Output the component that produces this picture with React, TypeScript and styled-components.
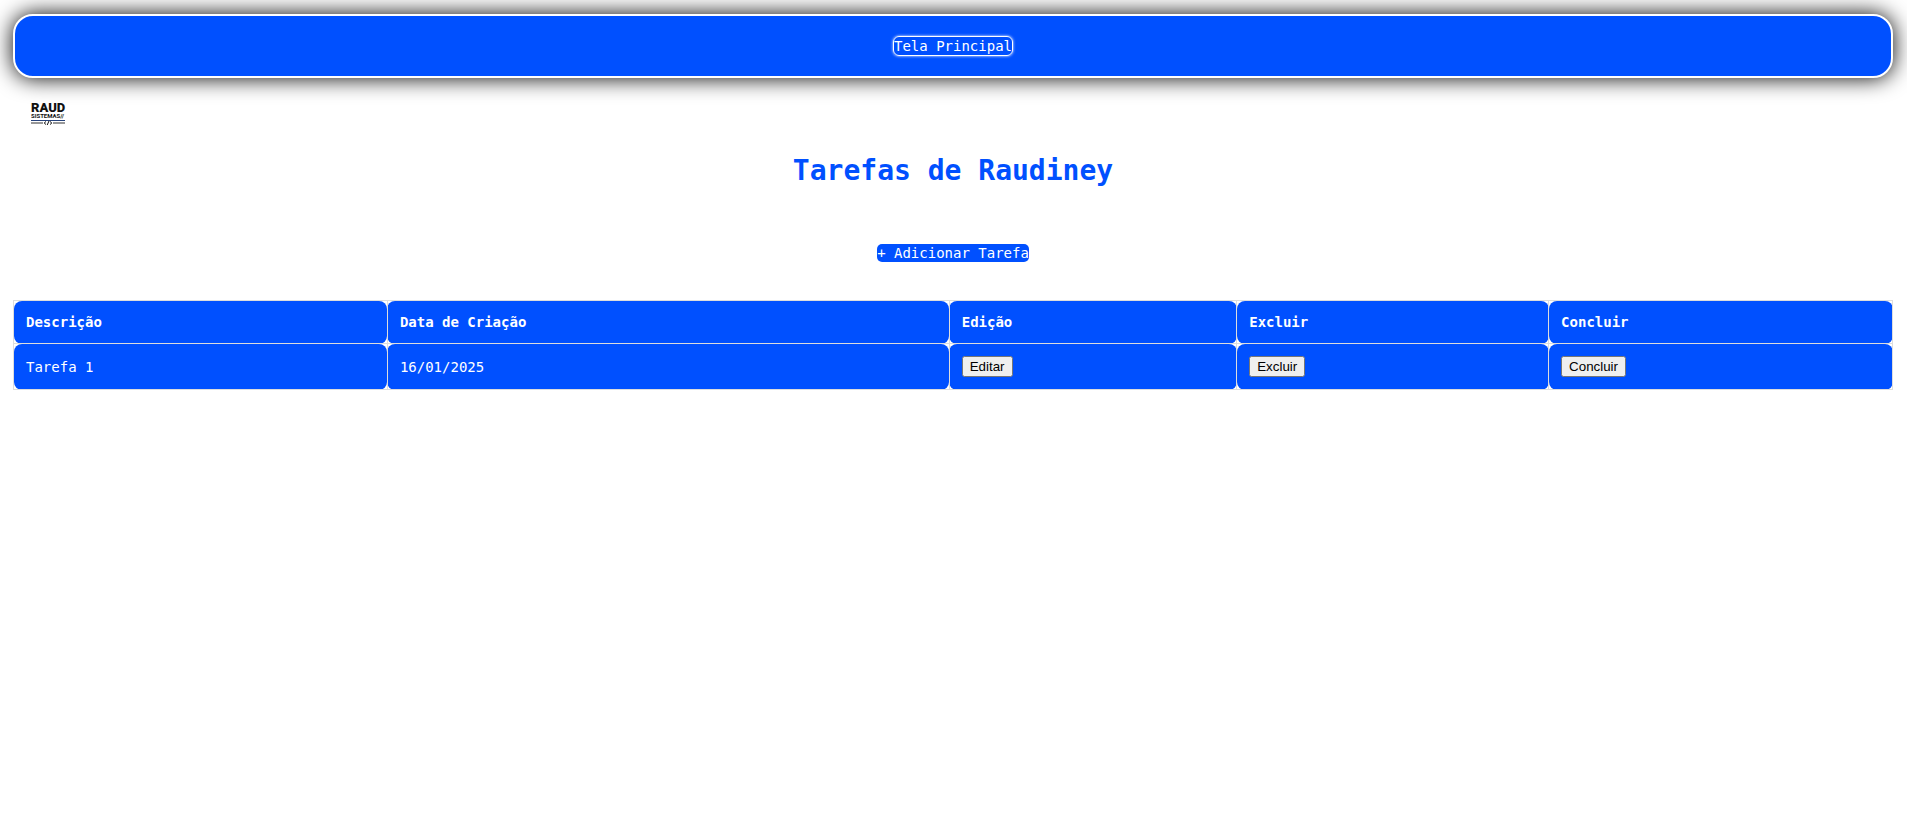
import React from "react";
import styled, { createGlobalStyle } from "styled-components";

const BLUE = "#0050ff";

const GlobalStyle = createGlobalStyle`
  body {
    margin: 0;
    background: #ffffff;
    font-family: Consolas, "DejaVu Sans Mono", monospace;
    font-size: 14px;
    line-height: 18px;
  }
`;

const Page = styled.div`
  display: flex;
  flex-direction: column;
  padding: 14px 14px 0 13px;
`;

const NavBar = styled.nav`
  display: flex;
  justify-content: center;
  align-items: center;
  padding: 20px;
  border: 2px solid #ffffff;
  border-radius: 20px;
  background: ${BLUE};
  box-shadow: 0 0 22px #000000;
`;

const NavLink = styled.a`
  border: 1px solid #ffffff;
  border-radius: 6px;
  box-shadow: 0 0 3px #ffffff;
  color: #ffffff;
  text-decoration: none;
`;

const Brand = styled.div`
  display: flex;
  padding: 22px 18px 0;
`;

const Title = styled.h1`
  margin: 27px 0 0;
  color: ${BLUE};
  font-size: 28px;
  line-height: 36px;
  text-align: center;
`;

const Actions = styled.div`
  display: flex;
  justify-content: center;
  padding: 55px 0 38px;
`;

const AddLink = styled.a`
  border-radius: 5px;
  background: ${BLUE};
  color: #ffffff;
  text-decoration: none;
`;

const TaskTable = styled.table`
  width: 100%;
  border-collapse: collapse;
  table-layout: fixed;
`;

const Column = styled.col<{ $share: number }>`
  width: ${({ $share }) => $share}%;
`;

const HeadCell = styled.th`
  padding: 12px;
  border: 1px solid #dddddd;
  border-radius: 8px;
  background: ${BLUE};
  color: #ffffff;
  text-align: left;
`;

const Cell = styled.td`
  padding: 12px;
  border: 1px solid #dddddd;
  border-radius: 8px;
  background: ${BLUE};
  color: #ffffff;
`;

const RowButton = styled.button`
  display: block;
  font-family: Arial, "Liberation Sans", sans-serif;
`;

const LogoName = styled.text`
  font: 900 13px Roboto, sans-serif;
  fill: #111111;
`;

const LogoTag = styled.text`
  font: 700 6px Roboto, sans-serif;
  fill: #111111;
`;

function Logo() {
  return (
    <svg width="40" height="26" viewBox="0 0 40 26" role="img" aria-label="Raud Sistemas">
      <LogoName x="0" y="12">
        RAUD
      </LogoName>
      <LogoTag x="0" y="18">
        SISTEMAS//
      </LogoTag>
      <path d="M0 20.5H34" stroke="#27437c" strokeWidth="1" />
      <path d="M0 23H12M22 23H34" stroke="#777777" strokeWidth="1.4" />
      <path d="M15 21.5L13.2 23L15 24.5M18 21L16.2 25M19 21.5L20.8 23L19 24.5" fill="none" stroke="#111111" strokeWidth="1" />
    </svg>
  );
}

const columns = [
  { label: "Descrição", share: 19.9 },
  { label: "Data de Criação", share: 29.9 },
  { label: "Edição", share: 15.3 },
  { label: "Excluir", share: 16.6 },
  { label: "Concluir", share: 18.3 },
];

const tasks = [{ description: "Tarefa 1", created: "16/01/2025" }];

export default function App() {
  return (
    <>
      <GlobalStyle />
      <Page>
        <NavBar>
          <NavLink href="#">Tela Principal</NavLink>
        </NavBar>
        <Brand>
          <Logo />
        </Brand>
        <Title>Tarefas de Raudiney</Title>
        <Actions>
          <AddLink href="#">+ Adicionar Tarefa</AddLink>
        </Actions>
        <TaskTable>
          <colgroup>
            {columns.map((c) => (
              <Column key={c.label} $share={c.share} />
            ))}
          </colgroup>
          <thead>
            <tr>
              {columns.map((c) => (
                <HeadCell key={c.label} scope="col">
                  {c.label}
                </HeadCell>
              ))}
            </tr>
          </thead>
          <tbody>
            {tasks.map((t) => (
              <tr key={t.description}>
                <Cell>{t.description}</Cell>
                <Cell>{t.created}</Cell>
                <Cell>
                  <RowButton type="button">Editar</RowButton>
                </Cell>
                <Cell>
                  <RowButton type="button">Excluir</RowButton>
                </Cell>
                <Cell>
                  <RowButton type="button">Concluir</RowButton>
                </Cell>
              </tr>
            ))}
          </tbody>
        </TaskTable>
      </Page>
    </>
  );
}
